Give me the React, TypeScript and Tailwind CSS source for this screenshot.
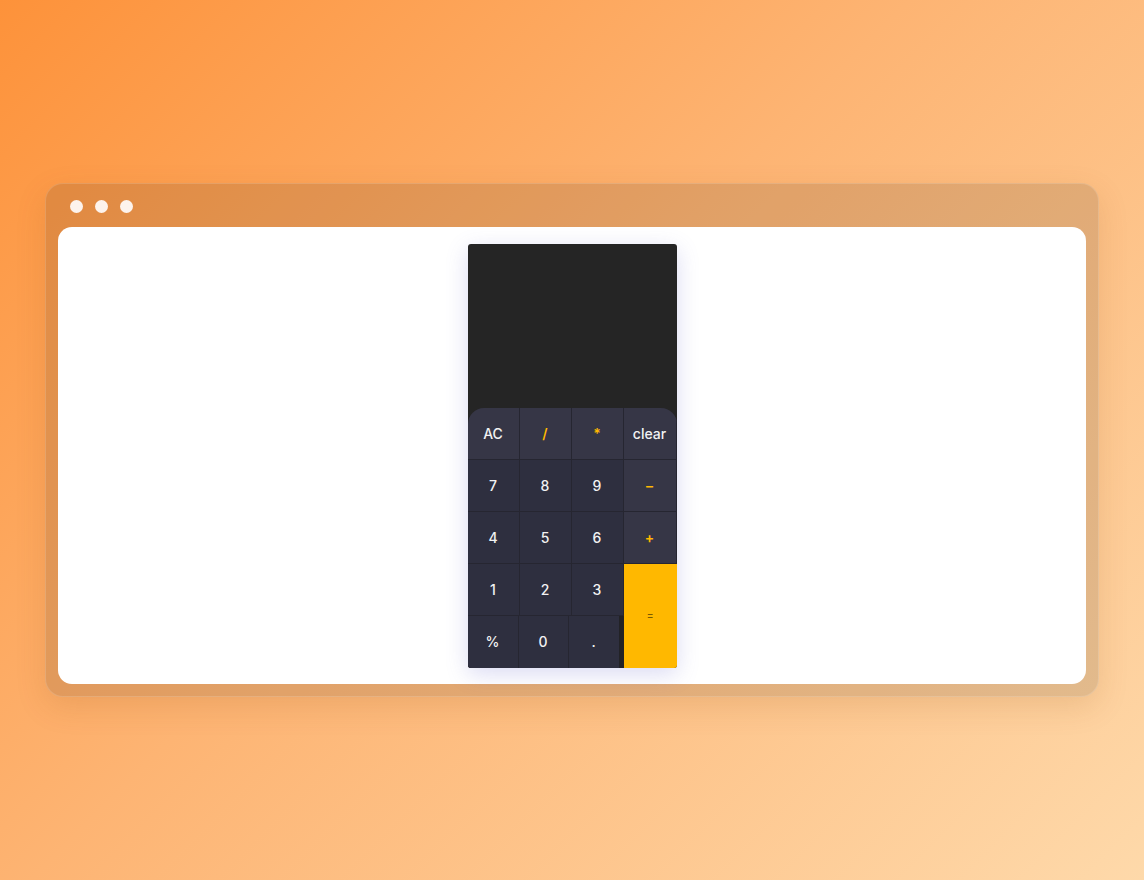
const font = { fontFamily: "Inter, 'Open Sans', sans-serif" };

function Key({ label, op, top }: { label: string; op?: boolean; top?: boolean }) {
  return (
    <button
      className={
        "flex items-center justify-center border-r border-b border-[#262631] text-[14px] " +
        (top || op ? "bg-[#363646] " : "bg-[#2e2f3f] ") +
        (op ? "font-semibold text-[#ffb800]" : "font-medium text-[#f2f2f2]")
      }
    >
      {label}
    </button>
  );
}

export default function App() {
  return (
    <div
      className="flex h-[880px] w-full items-center justify-center bg-[linear-gradient(135deg,#fd923a_0%,#fdb473_45%,#fed9aa_100%)]"
      style={font}
    >
      {/* Window */}
      <div className="flex h-[514px] w-[1054px] flex-col rounded-[18px] border border-white/15 bg-black/[0.11] px-3 pb-3 shadow-[0_10px_30px_rgba(150,80,20,0.15)]">
        <div className="flex h-[43px] shrink-0 items-center gap-3 pl-[12px] pt-[1px]">
          <span className="h-[13px] w-[13px] rounded-full bg-[#fdf3ec]" />
          <span className="h-[13px] w-[13px] rounded-full bg-[#fdf3ec]" />
          <span className="h-[13px] w-[13px] rounded-full bg-[#fdf3ec]" />
        </div>
        <div className="flex flex-1 items-center justify-center rounded-[14px] bg-white">
          {/* Calculator */}
          <div className="flex w-[209px] flex-col overflow-hidden rounded-[3px] bg-[#252525] shadow-[0_6px_22px_rgba(90,90,200,0.22)]">
            <div className="h-[164px]" />
            <div className="grid grid-cols-[52px_52px_52px_53px] grid-rows-[52px_52px_52px_52px_52px] overflow-hidden rounded-t-[16px]">
              <Key label="AC" top />
              <Key label="/" op top />
              <Key label="*" op top />
              <Key label="clear" top />
              <Key label="7" />
              <Key label="8" />
              <Key label="9" />
              <Key label="–" op />
              <Key label="4" />
              <Key label="5" />
              <Key label="6" />
              <Key label="+" op />
              <Key label="1" />
              <Key label="2" />
              <Key label="3" />
              <button className="row-span-2 flex items-center justify-center bg-[#ffb800] text-[10px] font-semibold text-[#7a5a00]">
                =
              </button>
              <div className="col-span-3 flex bg-[#222226]">
                <button className="flex w-[51px] items-center justify-center border-r border-[#262631] bg-[#2e2f3f] text-[14px] font-medium text-[#f2f2f2]">
                  %
                </button>
                <button className="flex w-[50px] items-center justify-center border-r border-[#262631] bg-[#2e2f3f] text-[14px] font-medium text-[#f2f2f2]">
                  0
                </button>
                <button className="flex w-[50px] items-center justify-center bg-[#2e2f3f] text-[14px] font-medium text-[#f2f2f2]">
                  .
                </button>
              </div>
            </div>
          </div>
        </div>
      </div>
    </div>
  );
}
